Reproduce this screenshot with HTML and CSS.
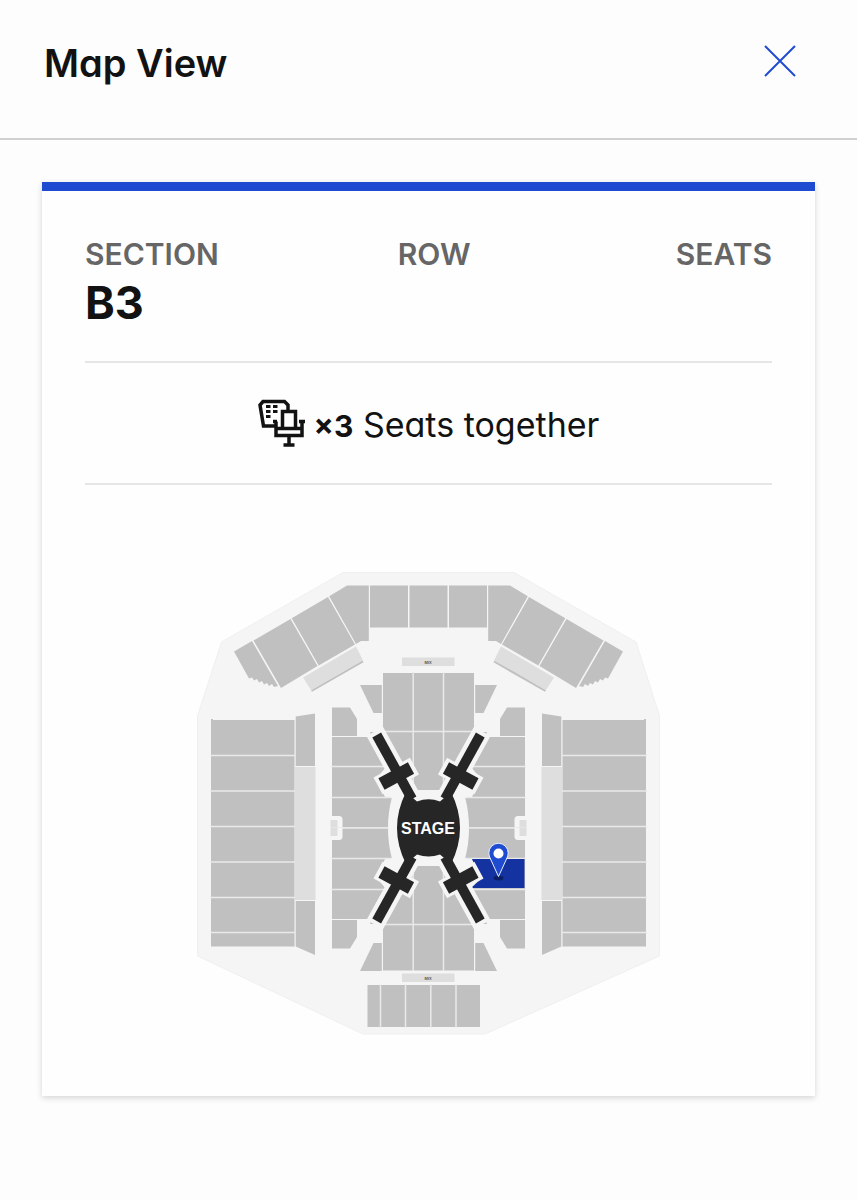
FILE: index.html
```html
<!DOCTYPE html>
<html lang="en">
<head>
    <meta charset="utf-8">
    <meta name="viewport" content="width=device-width, initial-scale=1">
    <title>Map View</title>
    <link rel="stylesheet" href="styles.css">
</head>
<body>
    <header class="header">
        <h1 class="title">Map View</h1>
        <button type="button" class="close" aria-label="Close">
            <svg viewBox="0 0 32 32" width="32" height="32" aria-hidden="true">
                <path d="M1 1 L31 31 M31 1 L1 31" />
            </svg>
        </button>
    </header>

    <main class="content">
        <section class="card">
            <dl class="details">
                <div class="detail">
                    <dt>SECTION</dt>
                    <dd>B3</dd>
                </div>
                <div class="detail">
                    <dt>ROW</dt>
                    <dd></dd>
                </div>
                <div class="detail">
                    <dt>SEATS</dt>
                    <dd></dd>
                </div>
            </dl>

            <div class="together">
                <svg class="seat-icon" viewBox="0 0 48 48" width="48" height="48" aria-hidden="true">
                    <path class="line" d="M17 27 H5.5 L2 6 L5 2.5 H26.5 L30 6 V12" />
                    <path class="dots" d="M8 6h4.5v3h-4.5z M15 6h4.5v3h-4.5z M8 11h4.5v3h-4.5z M15 11h4.5v3h-4.5z M8 16h4.5v3h-4.5z" />
                    <path class="line" d="M24.5 29 V12.5 H37.5 V29" />
                    <path class="line" d="M15 22.5 H19 M41 22.5 H47 M18 22.5 V36.5 H44 V22.5 M18 29.5 H44 M31 36.5 V46 M25.5 46 H36.5" />
                </svg>
                <p><strong>×3</strong> Seats together</p>
            </div>

            <svg class="map" viewBox="197 572 463 463" role="img" aria-label="Seating map">
                <defs>
                    <!-- left side of the upper bowl -->
                    <g id="stand">
                        <path class="seats" d="M234 651.5 L252 641 L278 686 L274 687 L272 684 L269 686 L267 683 L264 684.5 L262 681 L259 682.5 L257 679 L254 680.5 L252 677.5 L249 678.5 Z" />
                        <path class="seats" d="M253.5 640.5 L290.5 619 L317.5 666 L281 688 Z" />
                        <path class="seats" d="M291.7 618.3 L328 597 L355 644.5 L318.7 665.5 Z" />
                        <path class="seats" d="M329.2 596.3 L347 585.5 H368.8 V641 H361 L356 644 Z" />
                        <path class="suite" d="M303 677.5 L356 646.5 L363 660.5 L311 690 Z" />
                        <path class="rail" d="M311.5 691 L363 661.5" />
                        <path class="seats" d="M211 719 H213 V720 H294.5 V946.5 H211 Z" />
                        <path class="gap" d="M210 755.5 H295 M210 791 H295 M210 826.5 H295 M210 862 H295 M210 897.5 H295 M210 932.5 H295" />
                        <path class="seats" d="M295.7 716.5 L315 713.5 V766 H295.7 Z" />
                        <path class="suite" d="M295 767 H315.5 V900 H295 Z" />
                        <path class="seats" d="M295.7 901 H315 V955 L295.7 946.5 Z" />
                    </g>
                    <!-- one quarter of the floor, mirrored around the stage -->
                    <g id="floor">
                        <path class="seats" d="M332 707.5 H350 L357 719 V736 H332 Z" />
                        <path class="seats" d="M332 737 H369 L386 767 L376 779 L385 797 H392 Q388 812 388 828 H332 Z" />
                        <path class="gap" d="M331 766.5 H386 M331 797.5 H393 M331 828 H389" />
                        <path class="seats" d="M360 685 H381.8 V713 H373.5 Z" />
                        <path class="seats" d="M370 732 H429 V790 H413 L396 770 L383 765 Z" />
                        <path class="notch" d="M329 816 H339 Q342.5 816 342.5 819.5 V828 H329 Z" />
                        <path class="suite" d="M330.5 820 H337.5 V828 H330.5 Z" />
                    </g>
                    <g id="ramp">
                        <path d="M376.7 735 L412 799" />
                        <path class="cross" d="M381.5 784 L411 768" />
                    </g>
                    <path id="ramp-edge" d="M374.8 731.5 L412 799 M378 785.9 L414.5 766.1" />
                </defs>

                <path class="ground" d="M343 572.5 H514 L636 642 L659.5 716 V956 L485 1034 H363 L197.5 956 V716 L221.5 642 Z" />

                <use href="#stand" />
                <use href="#stand" transform="translate(857 0) scale(-1 1)" />
                <path class="seats" d="M370 585.5 H408 V627.5 H370 Z M409.5 585.5 H447.5 V627.5 H409.5 Z M449 585.5 H487 V627.5 H449 Z" />

                <use href="#floor" />
                <use href="#floor" transform="translate(857 0) scale(-1 1)" />
                <use href="#floor" transform="translate(0 1656) scale(1 -1)" />
                <use href="#floor" transform="translate(857 1656) scale(-1 -1)" />

                <path class="seats" d="M383 673 H474 V731 H383 Z" />
                <path class="seats" d="M383 925 H474 V970.5 H383 Z" />
                <path class="gap" d="M413.2 672 V790 M443.5 672 V790 M413.2 866 V971 M443.5 866 V971 M383 731.5 H474 M383 924.5 H474" />

                <!-- section B3 -->
                <path class="selected" d="M472 859 H524.5 V888 H471 L481 879 Z" />

                <g class="halo">
                    <use href="#ramp-edge" />
                    <use href="#ramp-edge" transform="translate(857 0) scale(-1 1)" />
                    <use href="#ramp-edge" transform="translate(0 1656) scale(1 -1)" />
                    <use href="#ramp-edge" transform="translate(857 1656) scale(-1 -1)" />
                    <path class="halo-body" d="M384 790.5 H473 L464 799 Q473 828 464 857 L473 865.5 H384 L393 857 Q384 828 393 799 Z" />
                </g>
                <g class="stage">
                    <use href="#ramp" />
                    <use href="#ramp" transform="translate(857 0) scale(-1 1)" />
                    <use href="#ramp" transform="translate(0 1656) scale(1 -1)" />
                    <use href="#ramp" transform="translate(857 1656) scale(-1 -1)" />
                    <path class="stage-body" d="M406 792 Q388 828 406 864 L417 854.5 Q428.5 858.5 440 854.5 L451 864 Q469 828 451 792 L440 801.5 Q428.5 797 417 801.5 Z" />
                </g>
                <text class="stage-label" x="428" y="834">STAGE</text>

                <path class="suite" d="M402 657.5 H454.5 V666 H402 Z M402 973.5 H454.5 V982 H402 Z" />
                <text class="mix-label" x="428" y="663.5">MIX</text>
                <text class="mix-label" x="428" y="979.5">MIX</text>

                <path class="seats" d="M367.5 985 H480 V1027 H367.5 Z" />
                <path class="gap" d="M380.5 984 V1028 M405.5 984 V1028 M430.8 984 V1028 M456 984 V1028" />

                <ellipse class="pin-shadow" cx="498.5" cy="878" rx="5" ry="2.5" />
                <path class="pin" d="M498.5 876.5 L490.5 859 Q488.8 856 488.8 853 A9.7 9.7 0 0 1 508.2 853 Q508.2 856 506.5 859 Z" />
                <circle class="pin-dot" cx="498.5" cy="853.5" r="5" />
            </svg>
        </section>
    </main>
</body>
</html>
```
FILE: styles.css
```css
body {
    margin: 0;
    background-color: #fdfdfd;
    color: #121212;
    font-family: Inter, "Liberation Sans", sans-serif;
    font-feature-settings: "cv11";
}

.header {
    display: flex;
    justify-content: space-between;
    align-items: flex-start;
    padding: 40px 61px 52px 44px;
    border-bottom: 2px solid #d0d0d0;
}

.title {
    margin: 0;
    font-size: 38px;
    line-height: 46px;
    font-weight: 600;
}

.close {
    padding: 5px 0;
    border: none;
    background: none;
    cursor: pointer;
}

.close svg {
    display: block;
    fill: none;
    stroke: #1f4bd0;
    stroke-width: 2;
}

.content {
    padding: 42px 42px 104px;
}

.card {
    padding: 45px 43px 61px;
    border-top: 9px solid #1f4bd0;
    background-color: #fefefe;
    box-shadow: 0 2px 6px rgba(0, 0, 0, 0.16);
}

.details {
    display: grid;
    grid-template-columns: 21fr 20fr 20fr;
    margin: 0;
    padding-bottom: 32px;
}

.detail:nth-child(2) {
    text-align: center;
}

.detail:nth-child(3) {
    text-align: right;
}

.detail dt {
    color: #666;
    font-size: 30px;
    line-height: 36px;
    font-weight: 600;
}

.detail dd {
    margin: 5px 0 0;
    font-size: 45px;
    line-height: 52px;
    font-weight: 700;
}

.together {
    display: flex;
    justify-content: center;
    align-items: center;
    gap: 8px;
    height: 120px;
    border-top: 2px solid #e6e6e6;
    border-bottom: 2px solid #e6e6e6;
}

.together p {
    margin: 0;
    padding-top: 4px;
    font-size: 34px;
    line-height: 40px;
}

.together strong {
    font-size: 30px;
    font-weight: 700;
}

.seat-icon .line {
    fill: none;
    stroke: #121212;
    stroke-width: 3.5;
}

.seat-icon .dots {
    fill: #121212;
}

.map {
    display: block;
    width: 100%;
    max-width: 463px;
    margin: 87px auto 0;
}

.ground {
    fill: #f5f5f5;
    stroke: #efefef;
}

.seats {
    fill: #c0c0c0;
}

.suite {
    fill: #dedede;
}

.rail {
    stroke: #c0c0c0;
    stroke-width: 2;
}

.gap {
    fill: none;
    stroke: #e9e9e9;
    stroke-width: 1.5;
}

.notch {
    fill: #f5f5f5;
}

.selected {
    fill: #1433a0;
}

.halo {
    fill: none;
    stroke: #f5f5f5;
    stroke-width: 19;
}

.halo-body {
    fill: #f5f5f5;
    stroke: none;
}

.stage {
    fill: none;
    stroke: #262626;
    stroke-width: 10;
}

.cross {
    stroke-width: 13;
}

.stage-body {
    fill: #262626;
    stroke: none;
}

.stage-label {
    fill: #fff;
    font-family: "Liberation Sans", Arial, sans-serif;
    font-size: 16px;
    font-weight: 700;
    text-anchor: middle;
}

.mix-label {
    fill: #555;
    font-family: "Liberation Sans", Arial, sans-serif;
    font-size: 4px;
    font-weight: 700;
    text-anchor: middle;
}

.pin {
    fill: #1f4bd0;
    stroke: #e8edfb;
}

.pin-dot {
    fill: #fff;
}

.pin-shadow {
    fill: #0b1f66;
}
```
